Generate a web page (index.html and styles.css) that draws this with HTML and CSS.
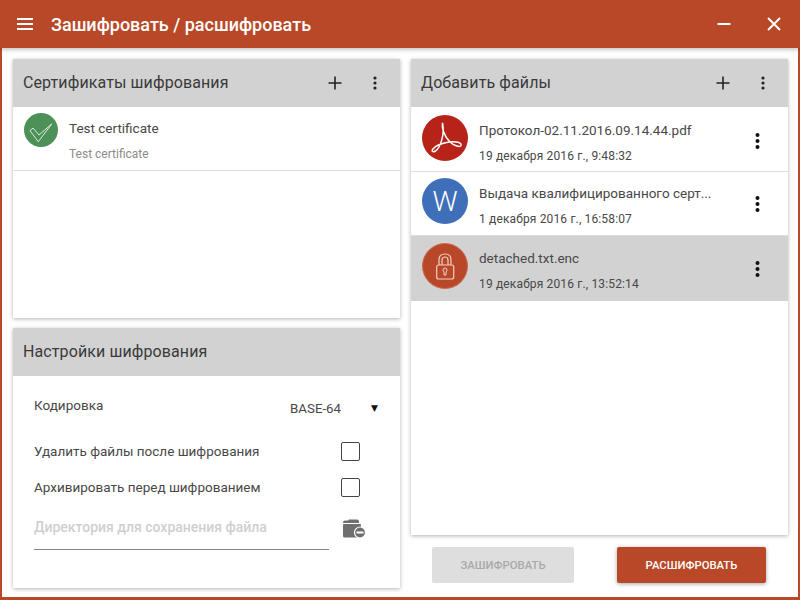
FILE: index.html
```html
<!doctype html>
<html lang="ru">
  <head>
    <title>Зашифровать / расшифровать</title>
    <meta charset="UTF-8">
    <link rel="stylesheet" href="styles.css">
  </head>
  <body>
<div class="window">
  <header class="titlebar">
    <svg class="hamburger" width="18" height="14" viewBox="0 0 18 14"><path d="M1 2h16M1 7h16M1 12h16" stroke="#fff" stroke-width="2"/></svg>
    <h1>Зашифровать / расшифровать</h1>
    <svg class="minimize" width="16" height="16" viewBox="0 0 16 16"><path d="M1.500 8h13" stroke="#fff" stroke-width="2"/></svg>
    <svg class="close" width="16" height="16" viewBox="0 0 16 16"><path d="M2 2l12 12M14 2L2 14" stroke="#fff" stroke-width="2"/></svg>
  </header>
  <main class="content">
    <div class="column">
      <section class="card card-certs">
        <div class="card-head">
          <h2>Сертификаты шифрования</h2>
          <svg class="plus" width="14" height="14" viewBox="0 0 14 14"><path d="M7 .5v13M.5 7h13" stroke="#222" stroke-width="1.600"/></svg>
          <svg class="dots" width="4" height="16" viewBox="0 0 4 16"><circle cx="2" cy="3" r="1.600"/><circle cx="2" cy="8" r="1.600"/><circle cx="2" cy="13" r="1.600"/></svg>
        </div>
        <div class="cert">
          <svg class="avatar-small" width="34" height="34" viewBox="0 0 34 34">
            <circle cx="17" cy="17" r="17" fill="#4e9158"/>
            <path d="M6 17.700L9 15l6 7 12.700-11-13.400 17.700z" fill="none" stroke="#fff" stroke-width=".8"/>
          </svg>
          <div class="cert-text">
            <div class="cert-name">Test certificate</div>
            <div class="cert-sub">Test certificate</div>
          </div>
        </div>
      </section>
      <section class="card">
        <div class="card-head">
          <h2>Настройки шифрования</h2>
        </div>
        <div class="settings">
          <div class="row row-encoding">
            <span>Кодировка</span>
            <span class="select"><span>BASE-64</span><span class="arrow">▼</span></span>
          </div>
          <div class="row row-check">
            <span>Удалить файлы после шифрования</span>
            <span class="checkbox"></span>
          </div>
          <div class="row row-check">
            <span>Архивировать перед шифрованием</span>
            <span class="checkbox"></span>
          </div>
          <div class="row row-dir">
            <div class="dir-input">Директория для сохранения файла</div>
            <svg class="folder" width="24" height="21" viewBox="0 0 24 21">
              <path d="M1 4.500q0-2 2-2h3l1-1h8q2 0 2 2V5H1z" fill="#6f6f6f"/>
              <path d="M1 7q0-1 1-1h16q1 0 1 1v11q0 1.500-1.500 1.500h-15Q1 19.500 1 18z" fill="#6f6f6f"/>
              <circle cx="18" cy="14.500" r="5.500" fill="#6f6f6f" stroke="#fff" stroke-width="1.200"/>
              <rect x="14.500" y="13.500" width="7" height="2" fill="#fff"/>
            </svg>
          </div>
        </div>
      </section>
    </div>
    <div class="column">
      <section class="card files">
        <div class="card-head">
          <h2>Добавить файлы</h2>
          <svg class="plus" width="14" height="14" viewBox="0 0 14 14"><path d="M7 .5v13M.5 7h13" stroke="#222" stroke-width="1.600"/></svg>
          <svg class="dots" width="4" height="16" viewBox="0 0 4 16"><circle cx="2" cy="3" r="1.600"/><circle cx="2" cy="8" r="1.600"/><circle cx="2" cy="13" r="1.600"/></svg>
        </div>
        <div class="file file-pdf">
          <svg class="avatar" width="46" height="46" viewBox="0 0 46 46">
            <circle cx="23" cy="23" r="23" fill="#b72318"/>
            <path d="M20.500 8C19.500 13 22 21 28 27c3 3 10 6 11 3.500C40 27.500 34 26 27 27c-6 1-13 3-16 7-2 2.500 0 3.500 2.500 2C18 33 23 20 20.500 8z" fill="none" stroke="#fff" stroke-width="1.500"/>
          </svg>
          <div class="file-text">
            <div class="file-name">Протокол-02.11.2016.09.14.44.pdf</div>
            <div class="file-date">19 декабря 2016 г., 9:48:32</div>
          </div>
          <svg class="dots dots-file" width="5" height="16" viewBox="0 0 5 16"><circle cx="2.500" cy="2" r="2"/><circle cx="2.500" cy="8" r="2"/><circle cx="2.500" cy="14" r="2"/></svg>
        </div>
        <div class="file file-doc">
          <svg class="avatar" width="46" height="46" viewBox="0 0 46 46">
            <circle cx="23" cy="23" r="23" fill="#3e6fb8"/>
            <text class="avatar-letter" x="23" y="33" text-anchor="middle">W</text>
          </svg>
          <div class="file-text">
            <div class="file-name">Выдача квалифицированного серт...</div>
            <div class="file-date">1 декабря 2016 г., 16:58:07</div>
          </div>
          <svg class="dots dots-file" width="5" height="16" viewBox="0 0 5 16"><circle cx="2.500" cy="2" r="2"/><circle cx="2.500" cy="8" r="2"/><circle cx="2.500" cy="14" r="2"/></svg>
        </div>
        <div class="file selected">
          <svg class="avatar" width="46" height="46" viewBox="0 0 46 46">
            <circle cx="23" cy="23" r="22.500" fill="#b9482a" stroke="#cf6a4c"/>
            <rect x="14.700" y="22" width="17" height="14" rx="2" fill="none" stroke="#f0cfc4" stroke-width="1.200"/>
            <path d="M17 22v-5q0-6 6-6t6 6v5M20 22v-5q0-3 3-3t3 3v5" fill="none" stroke="#f0cfc4" stroke-width="1.200"/>
            <path d="M21 27a2 2 0 1 1 4 0q0 1-1 2v3h-2v-3q-1-1-1-2z" fill="none" stroke="#f0cfc4" stroke-width="1"/>
          </svg>
          <div class="file-text">
            <div class="file-name">detached.txt.enc</div>
            <div class="file-date">19 декабря 2016 г., 13:52:14</div>
          </div>
          <svg class="dots dots-file" width="5" height="16" viewBox="0 0 5 16"><circle cx="2.500" cy="2" r="2"/><circle cx="2.500" cy="8" r="2"/><circle cx="2.500" cy="14" r="2"/></svg>
        </div>
      </section>
      <div class="actions">
        <button class="btn btn-disabled">Зашифровать</button>
        <button class="btn btn-primary">Расшифровать</button>
      </div>
    </div>
  </main>
</div>
  </body>
</html>
```

FILE: styles.css
```css
html, body {
  margin: 0;
  height: 100%;
  font-family: Roboto, "Liberation Sans", sans-serif;
  color: #484848;
  overflow: hidden;
}
h1, h2 {
  margin: 0;
  font-weight: 400;
}
.window {
  width: 800px;
  height: 600px;
  box-sizing: border-box;
  border: solid #b84827;
  border-width: 0 2px 3px;
  background: #fff;
  display: flex;
  flex-direction: column;
}
.titlebar {
  height: 48px;
  flex: none;
  margin: 0 -2px;
  background: #b84827;
  color: #fff;
  display: flex;
  align-items: center;
  box-shadow: 0 1px 5px rgba(0,0,0,.3);
  position: relative;
}
.hamburger {
  margin-left: 16px;
}
.titlebar h1 {
  font-size: 18px;
  font-weight: 500;
  margin-left: 17px;
  flex: 1;
}
.minimize {
  margin-right: 34px;
}
.close {
  margin-right: 18px;
}
.content {
  flex: 1;
  display: grid;
  grid-template-columns: 387px 377px;
  gap: 11px;
  padding: 11px 0 9px 11px;
  min-height: 0;
}
.column {
  display: flex;
  flex-direction: column;
  gap: 10px;
  min-height: 0;
}
.card {
  flex: 1;
  background: #fff;
  box-shadow: 0 1px 4px rgba(0,0,0,.3);
  min-height: 0;
}
.card-certs {
  flex: 0 0 259px;
}
.card-head {
  height: 48px;
  box-sizing: border-box;
  padding: 0 23px 2px 10px;
  background: #d2d2d2;
  display: flex;
  align-items: center;
}
.card-head h2 {
  font-size: 16px;
  letter-spacing: .1px;
  color: #3a3a3a;
  flex: 1;
}
.plus {
  margin-right: 31px;
  margin-top: 2px;
}
.dots {
  fill: #222;
  margin-top: 2px;
}
.cert {
  height: 63px;
  border-bottom: 1px solid #dcdcdc;
  display: flex;
  padding-left: 11px;
}
.avatar-small {
  margin-top: 6px;
}
.cert-text {
  margin-left: 11px;
}
.cert-name {
  font-size: 13.500px;
  margin-top: 13px;
  line-height: 16px;
}
.cert-sub {
  font-size: 12px;
  color: #8c8c8c;
  margin-top: 11px;
  line-height: 14px;
}
.settings {
  padding: 0 21px;
  font-size: 13.500px;
}
.row {
  display: flex;
  align-items: center;
  justify-content: space-between;
}
.row-encoding {
  height: 57px;
  padding-right: 1px;
}
.select {
  display: flex;
  align-items: center;
  gap: 30px;
  margin-top: 7px;
  font-size: 13.300px;
}
.arrow {
  font-size: 9px;
  color: #111;
  font-family: "DejaVu Sans", sans-serif;
}
.row-check {
  height: 36px;
  padding-right: 19px;
}
.checkbox {
  width: 17px;
  height: 17px;
  border: 1.500px solid #444;
  border-radius: 2px;
}
.row-dir {
  margin-top: 10px;
  align-items: flex-start;
  gap: 13px;
  justify-content: flex-start;
}
.dir-input {
  width: 295px;
  height: 34px;
  border-bottom: 1px solid #85818f;
  color: #cfcfcf;
  font-size: 14px;
  font-weight: 500;
  line-height: 24px;
}
.folder {
  margin-top: 3px;
}
.file {
  height: 56px;
  padding: 8px 0 0 11px;
  border-bottom: 1px solid #dcdcdc;
  display: flex;
  align-items: flex-start;
}
.file-doc {
  height: 57px;
  padding-top: 6px;
}
.file.selected {
  height: 58px;
  padding-top: 7px;
  background: #d2d2d2;
  border-bottom: 0;
}
.avatar-letter {
  font-size: 28px;
  font-weight: 300;
  fill: #fff;
}
.file-text {
  margin: 7px 0 0 11px;
  flex: 1;
  min-width: 0;
}
.file-name {
  font-size: 13.500px;
  line-height: 16px;
}
.file-date {
  font-size: 12px;
  letter-spacing: .15px;
  line-height: 14px;
  margin-top: 11px;
}
.dots-file {
  fill: #111;
  margin: 18px 28px 0 0;
}
.actions {
  flex: none;
  height: 36px;
  margin: 2px 0 5px;
  display: flex;
  justify-content: space-between;
  padding: 0 22px 0 21px;
}
.btn {
  height: 36px;
  border: 0;
  border-radius: 2px;
  font-family: inherit;
  font-size: 11.300px;
  font-weight: 500;
  text-transform: uppercase;
}
.btn-disabled {
  width: 142px;
  background: #dedede;
  color: #a9a9a9;
}
.btn-primary {
  width: 149px;
  background: #b84827;
  color: #fff;
  box-shadow: 0 1px 4px rgba(0,0,0,.35);
}
```
